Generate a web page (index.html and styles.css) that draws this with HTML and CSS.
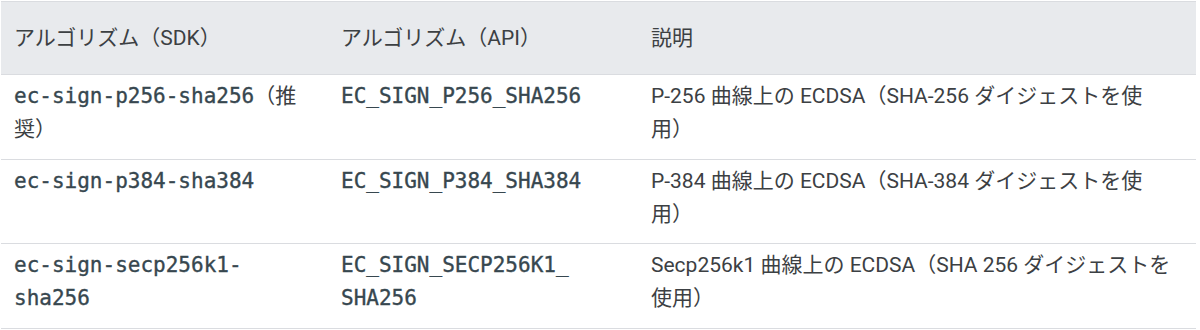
FILE: index.html
```html
<!DOCTYPE html>
<html lang="ja">
<head>
<meta charset="utf-8">
<title>アルゴリズム</title>
<link rel="stylesheet" href="styles.css">
</head>
<body>
<div class="wrap">
<table class="algos">
  <colgroup>
    <col class="c1">
    <col class="c2">
    <col class="c3">
  </colgroup>
  <thead>
    <tr>
      <th>アルゴリズム（SDK）</th>
      <th>アルゴリズム（API）</th>
      <th>説明</th>
    </tr>
  </thead>
  <tbody>
    <tr>
      <td><code>ec-sign-p256-sha256</code>（推奨）</td>
      <td><code>EC_SIGN_P256_SHA256</code></td>
      <td>P-256 曲線上の ECDSA（SHA-256 ダイジェストを使用）</td>
    </tr>
    <tr>
      <td><code>ec-sign-p384-sha384</code></td>
      <td><code>EC_SIGN_P384_SHA384</code></td>
      <td>P-384 曲線上の ECDSA（SHA-384 ダイジェストを使用）</td>
    </tr>
    <tr>
      <td><code>ec-sign-secp256k1-sha256</code></td>
      <td><code>EC_SIGN_SECP256K1_<wbr>SHA256</code></td>
      <td>Secp256k1 曲線上の ECDSA（SHA 256 ダイジェストを使用）</td>
    </tr>
  </tbody>
</table>
</div>
</body>
</html>
```

FILE: styles.css
```css
html, body {
  margin: 0;
  padding: 0;
  background: #ffffff;
}

.wrap {
  padding: 1px 0 0 1px;
}

.algos {
  border-collapse: collapse;
  table-layout: fixed;
  width: 1195px;
  border-top: 1px solid #dadce0;
  font-family: Roboto, "Noto Sans CJK JP", sans-serif;
  font-size: 21px;
  color: #3c4043;
  text-spacing-trim: space-all;
}

.c1 { width: 327px; }
.c2 { width: 310px; }
.c3 { width: 558px; }

.algos th {
  background: #e8eaed;
  font-weight: 400;
  text-align: left;
  line-height: 30px;
  padding: 21px 22px 21px 13px;
  border-bottom: 1px solid #dadce0;
}

.algos td {
  vertical-align: top;
  text-align: left;
  line-height: 33px;
  padding: 5px 22px 12.5px 13px;
  border-bottom: 1px solid #dadce0;
}

.algos code {
  font-family: "DejaVu Sans Mono", "Noto Sans CJK JP", monospace;
  font-size: 21px;
  color: #37474f;
  -webkit-text-stroke: 0.35px #37474f;
}
```
